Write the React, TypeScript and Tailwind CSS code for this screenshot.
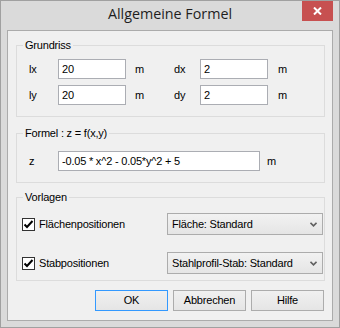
import React from "react";

function Group({
  label,
  className,
  children,
}: {
  label: string;
  className: string;
  children: React.ReactNode;
}) {
  return (
    <div className={"relative border border-[#dcdcdc] " + className}>
      <span className="absolute left-[6px] top-[-7px] px-[2px] bg-[#f0f0f0] leading-[13px] whitespace-nowrap">
        {label}
      </span>
      {children}
    </div>
  );
}

function TextBox({ value, className }: { value: string; className: string }) {
  return (
    <input
      readOnly
      value={value}
      className={
        "h-[20px] border border-[#abadb3] bg-white pl-[3px] text-[11px] tracking-[-0.2px] font-['Liberation_Sans',Arial,sans-serif] text-black outline-none " +
        className
      }
    />
  );
}

function Check() {
  return (
    <div className="w-[13px] h-[13px] border border-[#333333] bg-white flex items-center justify-center shrink-0">
      <svg width="11" height="11" viewBox="0 0 11 11">
        <path d="M1.5 5.5 L4 8 L9.5 2" fill="none" stroke="#000" strokeWidth="2" />
      </svg>
    </div>
  );
}

function Select({ text }: { text: string }) {
  return (
    <div className="w-[156px] h-[22px] border border-[#acacac] bg-gradient-to-b from-[#f2f2f2] to-[#e5e5e5] flex items-center pl-[4px] pr-[5px]">
      <span className="flex-1 whitespace-nowrap">{text}</span>
      <svg width="7" height="5" viewBox="0 0 7 5">
        <path d="M0.5 0.8 L3.5 3.8 L6.5 0.8" fill="none" stroke="#606060" strokeWidth="1.6" />
      </svg>
    </div>
  );
}

function Btn({ label, primary }: { label: string; primary?: boolean }) {
  return (
    <div
      className={
        "w-[73px] h-[21px] flex items-center justify-center bg-gradient-to-b from-[#f0f0f0] to-[#e5e5e5] border " +
        (primary ? "border-[#3399ff]" : "border-[#acacac]")
      }
    >
      {label}
    </div>
  );
}

export default function App() {
  return (
    <div className="w-[340px] h-[328px] bg-[#dadada] border border-[#a0a0a0] flex flex-col text-black text-[11px] tracking-[-0.2px] font-['Liberation_Sans',Arial,sans-serif]">
      {/* title bar */}
      <div className="h-[29px] grid">
        <div className="col-start-1 row-start-1 text-center leading-[25px] text-[14.3px] tracking-normal text-[#1e1e1e] font-['Open_Sans','Noto_Sans',sans-serif]">
          Allgemeine Formel
        </div>
        <div className="col-start-1 row-start-1 justify-self-end self-start mr-[6px] w-[31px] h-[20px] bg-[#c75050] flex items-center justify-center">
          <svg width="9" height="8" viewBox="0 0 9 8">
            <path d="M1 0.5 L8 7.5 M8 0.5 L1 7.5" stroke="#fff" strokeWidth="2" />
          </svg>
        </div>
      </div>

      {/* client */}
      <div className="mx-[6px] h-[291px] bg-[#f0f0f0] border border-[#ababab] pl-[8px] pr-[7px] pt-[14px] flex flex-col">
        <Group label="Grundriss" className="h-[72px] pt-[13px] pl-[12px] flex flex-col gap-[6px]">
          <div className="flex items-center">
            <span className="w-[29px]">lx</span>
            <TextBox value="20" className="w-[68px]" />
            <span className="ml-[9px] w-[39px]">m</span>
            <span className="w-[26px]">dx</span>
            <TextBox value="2" className="w-[68px]" />
            <span className="ml-[10px]">m</span>
          </div>
          <div className="flex items-center">
            <span className="w-[29px]">ly</span>
            <TextBox value="20" className="w-[68px]" />
            <span className="ml-[9px] w-[39px]">m</span>
            <span className="w-[26px]">dy</span>
            <TextBox value="2" className="w-[68px]" />
            <span className="ml-[10px]">m</span>
          </div>
        </Group>

        <Group label="Formel : z = f(x,y)" className="mt-[16px] h-[50px] pt-[17px] pl-[12px]">
          <div className="flex items-center">
            <span className="w-[29px]">z</span>
            <TextBox value="-0.05 * x^2 - 0.05*y^2 + 5" className="w-[202px]" />
            <span className="ml-[7px]">m</span>
          </div>
        </Group>

        <Group label="Vorlagen" className="mt-[14px] h-[84px] pt-[15px] pl-[5px] flex flex-col gap-[17px]">
          <div className="flex items-center">
            <div className="w-[145px] flex items-center gap-[4px]">
              <Check />
              <span>Flächenpositionen</span>
            </div>
            <Select text="Fläche: Standard" />
          </div>
          <div className="flex items-center">
            <div className="w-[145px] flex items-center gap-[4px]">
              <Check />
              <span>Stabpositionen</span>
            </div>
            <Select text="Stahlprofil-Stab: Standard" />
          </div>
        </Group>

        <div className="mt-[9px] mr-[1px] flex justify-end gap-[5px]">
          <Btn label="OK" primary />
          <Btn label="Abbrechen" />
          <Btn label="Hilfe" />
        </div>
      </div>
    </div>
  );
}
